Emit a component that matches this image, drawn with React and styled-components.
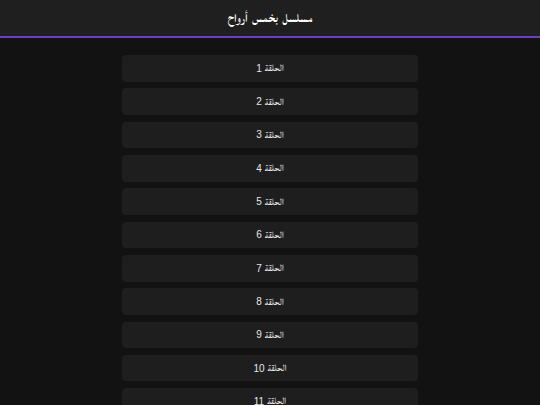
import React from 'react'
import styled, { createGlobalStyle } from 'styled-components'

const GlobalStyle = createGlobalStyle`
  html, body {
    margin: 0;
    padding: 0;
    background: #121212;
    font-family: 'Liberation Sans', 'Lateef', sans-serif;
  }
`

const Page = styled.div`
  min-height: 100vh;
  background: #121212;
  color: #fff;
`

const Header = styled.header`
  height: 36px;
  display: flex;
  align-items: center;
  justify-content: center;
  background: #1f1f1f;
  border-bottom: 2px solid #6c3ec4;
`

const Title = styled.h1`
  margin: 0;
  font-size: 15.5px;
  font-weight: bold;
  color: #fff;
`

const List = styled.ul`
  list-style: none;
  margin: 0 auto;
  padding: 17px 0 0;
  width: 296px;
  display: flex;
  flex-direction: column;
  gap: 6.67px;
`

const Episode = styled.li`
  height: 26.67px;
  display: flex;
  align-items: center;
  justify-content: center;
  gap: 3px;
  background: #1e1e1e;
  border-radius: 4px;
  font-size: 10px;
  color: #e6e6e6;
`

const Word = styled.span`
  font-size: 12.5px;
`

const episodes = Array.from({ length: 14 }, (_, i) => i + 1)

export default function App() {
  return (
    <Page dir="rtl">
      <GlobalStyle />
      <Header>
        <Title>مسلسل بخمس أرواح</Title>
      </Header>
      <List>
        {episodes.map(n => (
          <Episode key={n}>
            <Word>الحلقة</Word>
            <span>{n}</span>
          </Episode>
        ))}
      </List>
    </Page>
  )
}
